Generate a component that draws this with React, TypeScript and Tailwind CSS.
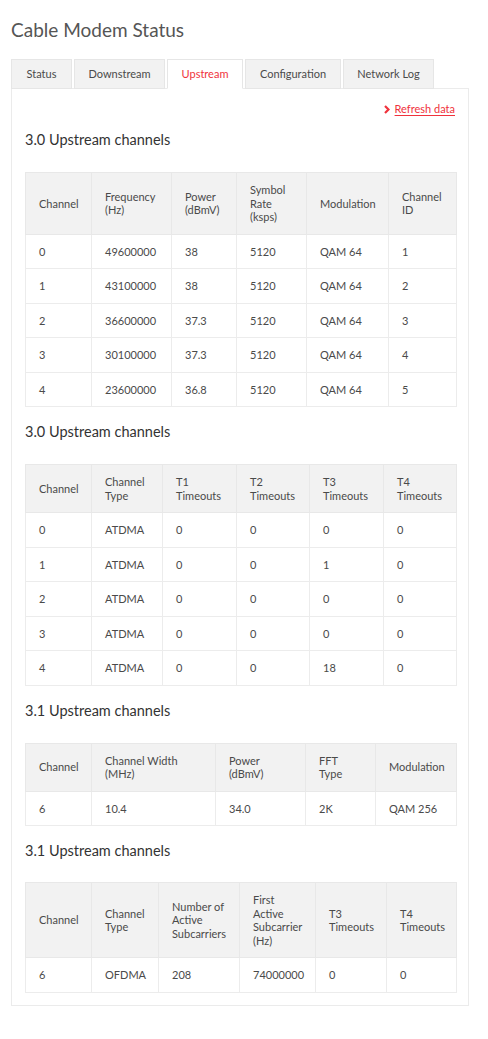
import React from "react";

type Table = {
  widths: string[];
  head: string[][];
  rows: string[][];
};

const tables: { title: string; table: Table }[] = [
  {
    title: "3.0 Upstream channels",
    table: {
      widths: ["w-[66px]", "w-[80px]", "w-[65px]", "w-[70px]", "w-[82px]", "w-[68px]"],
      head: [["Channel"], ["Frequency", "(Hz)"], ["Power", "(dBmV)"], ["Symbol", "Rate", "(ksps)"], ["Modulation"], ["Channel", "ID"]],
      rows: [
        ["0", "49600000", "38", "5120", "QAM 64", "1"],
        ["1", "43100000", "38", "5120", "QAM 64", "2"],
        ["2", "36600000", "37.3", "5120", "QAM 64", "3"],
        ["3", "30100000", "37.3", "5120", "QAM 64", "4"],
        ["4", "23600000", "36.8", "5120", "QAM 64", "5"],
      ],
    },
  },
  {
    title: "3.0 Upstream channels",
    table: {
      widths: ["w-[66px]", "w-[71px]", "w-[74px]", "w-[73px]", "w-[74px]", "w-[73px]"],
      head: [["Channel"], ["Channel", "Type"], ["T1", "Timeouts"], ["T2", "Timeouts"], ["T3", "Timeouts"], ["T4", "Timeouts"]],
      rows: [
        ["0", "ATDMA", "0", "0", "0", "0"],
        ["1", "ATDMA", "0", "0", "1", "0"],
        ["2", "ATDMA", "0", "0", "0", "0"],
        ["3", "ATDMA", "0", "0", "0", "0"],
        ["4", "ATDMA", "0", "0", "18", "0"],
      ],
    },
  },
  {
    title: "3.1 Upstream channels",
    table: {
      widths: ["w-[66px]", "w-[124px]", "w-[90px]", "w-[70px]", "w-[81px]"],
      head: [["Channel"], ["Channel Width", "(MHz)"], ["Power", "(dBmV)"], ["FFT", "Type"], ["Modulation"]],
      rows: [["6", "10.4", "34.0", "2K", "QAM 256"]],
    },
  },
  {
    title: "3.1 Upstream channels",
    table: {
      widths: ["w-[66px]", "w-[67px]", "w-[81px]", "w-[76px]", "w-[71px]", "w-[70px]"],
      head: [
        ["Channel"],
        ["Channel", "Type"],
        ["Number of", "Active", "Subcarriers"],
        ["First", "Active", "Subcarrier", "(Hz)"],
        ["T3", "Timeouts"],
        ["T4", "Timeouts"],
      ],
      rows: [["6", "OFDMA", "208", "74000000", "0", "0"]],
    },
  },
];

const tabs = [
  { label: "Status", w: "w-[61px]" },
  { label: "Downstream", w: "w-[91px]" },
  { label: "Upstream", w: "w-[76px]", active: true },
  { label: "Configuration", w: "w-[96px]" },
  { label: "Network Log", w: "w-[91px]" },
];

function DataTable({ table }: { table: Table }) {
  return (
    <table className="w-full table-fixed border-collapse text-[11px] leading-[13.5px] text-[#4a4a4a]">
      <colgroup>
        {table.widths.map((w, i) => (
          <col key={i} className={w} />
        ))}
      </colgroup>
      <thead>
        <tr className="bg-[#f2f2f2]">
          {table.head.map((lines, i) => (
            <th key={i} className="border border-[#e8e8e8] px-[13px] py-[10px] text-left align-middle font-normal">
              {lines.map((l, j) => (
                <div key={j} className="whitespace-nowrap">
                  {l}
                </div>
              ))}
            </th>
          ))}
        </tr>
      </thead>
      <tbody>
        {table.rows.map((row, i) => (
          <tr key={i}>
            {row.map((c, j) => (
              <td key={j} className="border border-[#ececec] px-[13px] py-[10px] align-middle">
                {c}
              </td>
            ))}
          </tr>
        ))}
      </tbody>
    </table>
  );
}

export default function App() {
  return (
    <div className="min-h-[1039px] bg-white pl-[11px] pr-[19px] pt-[17px] font-['Lato',sans-serif] text-[#4a4a4a]">
      <h1 className="text-[19px] leading-[26px] font-normal text-[#555]">Cable Modem Status</h1>

      <div className="mt-[16px] flex gap-[2px]">
        {tabs.map((t) => (
          <div
            key={t.label}
            className={`${t.w} flex h-[30px] items-center justify-center border border-[#e6e6e6] text-[11px] ${
              t.active ? "relative z-10 -mb-px border-b-white bg-white text-[#f0323c]" : "bg-[#f2f2f2] text-[#4a4a4a]"
            }`}
          >
            {t.label}
          </div>
        ))}
      </div>

      <div className="-mt-px border border-[#ebebeb] px-[13px] pt-[12px] pb-[12px]">
        <div className="flex justify-end">
          <a href="#" className="flex items-center gap-[5px] text-[11px] leading-[16px] text-[#f0323c]">
            <svg width="6" height="9" viewBox="0 0 6 9" fill="none">
              <path d="M1 1l3.5 3.5L1 8" stroke="#f0323c" strokeWidth="2.2" />
            </svg>
            <span className="underline underline-offset-2">Refresh data</span>
          </a>
        </div>

        {tables.map((s, i) => (
          <div key={i}>
            <h2
              className={`${i === 0 ? "mt-[13px]" : "mt-[15px]"} ${
                i === 3 ? "mb-[21px]" : "mb-[22px]"
              } text-[14.5px] leading-[20px] font-normal text-[#333]`}
            >
              {s.title}
            </h2>
            <DataTable table={s.table} />
          </div>
        ))}
      </div>
    </div>
  );
}
